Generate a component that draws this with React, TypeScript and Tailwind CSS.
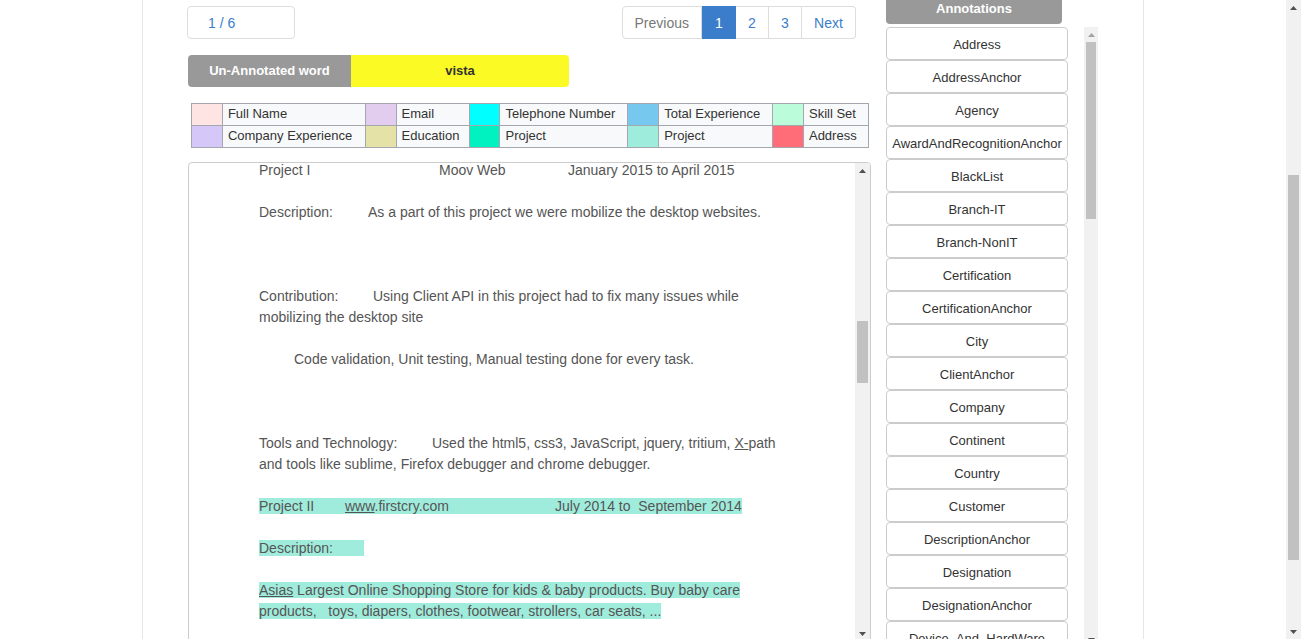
import React from 'react';

const legendRows = [
  [
    { color: 'bg-[#ffe4e4]', label: 'Full Name' },
    { color: 'bg-[#e3cdef]', label: 'Email' },
    { color: 'bg-[#00ffff]', label: 'Telephone Number' },
    { color: 'bg-[#77c8ef]', label: 'Total Experience' },
    { color: 'bg-[#bbfcda]', label: 'Skill Set' },
  ],
  [
    { color: 'bg-[#d5c8f8]', label: 'Company Experience' },
    { color: 'bg-[#e5e2a8]', label: 'Education' },
    { color: 'bg-[#00f2c0]', label: 'Project' },
    { color: 'bg-[#9decdc]', label: 'Project' },
    { color: 'bg-[#ff6e78]', label: 'Address' },
  ],
];

const labelWidths = ['w-[143px]', 'w-[73px]', 'w-[128px]', 'w-[114px]', 'w-[65px]'];

const annotations = [
  'Address',
  'AddressAnchor',
  'Agency',
  'AwardAndRecognitionAnchor',
  'BlackList',
  'Branch-IT',
  'Branch-NonIT',
  'Certification',
  'CertificationAnchor',
  'City',
  'ClientAnchor',
  'Company',
  'Continent',
  'Country',
  'Customer',
  'DescriptionAnchor',
  'Designation',
  'DesignationAnchor',
  'Device_And_HardWare',
];

function Arrow({ up, light }: { up?: boolean; light?: boolean }) {
  return (
    <svg width="7" height="4" viewBox="0 0 7 4">
      <path d={up ? 'M0 4 L3.5 0 L7 4 Z' : 'M0 0 L3.5 4 L7 0 Z'} fill={light ? '#a3a3a3' : '#505050'} />
    </svg>
  );
}

// fake native scrollbar: arrow, track with thumb, arrow
function Scrollbar({ thumb, lightUp, className }: { thumb: string; lightUp?: boolean; className: string }) {
  return (
    <div className={`flex flex-col bg-[#f1f1f1] ${className}`}>
      <div className="h-[15px] flex items-center justify-center shrink-0">
        <Arrow up light={lightUp} />
      </div>
      <div className="flex-1 px-[2px]">
        <div className={`bg-[#c1c1c1] ${thumb}`}></div>
      </div>
      <div className="h-[15px] flex items-center justify-center shrink-0">
        <Arrow />
      </div>
    </div>
  );
}

const hl = 'bg-[#a0ecdc]';

function ResumeText() {
  return (
    <div className="pl-[70px] mt-[-3px] text-[14px] leading-[21px] text-[#555] whitespace-pre">
      <div>
        <span className="inline-block w-[180px]">Project I</span>
        <span className="inline-block w-[129px]">Moov Web</span>
        January 2015 to April 2015
      </div>
      <div>&nbsp;</div>
      <div>
        <span className="inline-block w-[109px]">Description:</span>
        As a part of this project we were mobilize the desktop websites.
      </div>
      <div>&nbsp;</div>
      <div>&nbsp;</div>
      <div>&nbsp;</div>
      <div>
        <span className="inline-block w-[114px]">Contribution:</span>
        Using Client API in this project had to fix many issues while
      </div>
      <div>mobilizing the desktop site</div>
      <div>&nbsp;</div>
      <div className="pl-[35px]">Code validation, Unit testing, Manual testing done for every task.</div>
      <div>&nbsp;</div>
      <div>&nbsp;</div>
      <div>&nbsp;</div>
      <div>
        <span className="inline-block w-[173px]">Tools and Technology:</span>
        Used the html5, css3, JavaScript, jquery, tritium, <span className="underline">X-</span>path
      </div>
      <div>and tools like sublime, Firefox debugger and chrome debugger.</div>
      <div>&nbsp;</div>
      <div>
        <span className={hl}>
          <span className="inline-block w-[86px]">Project II</span>
          <span className="inline-block w-[210px]">
            <span className="underline">www</span>.firstcry.com
          </span>
          July 2014 to  September 2014
        </span>
      </div>
      <div>&nbsp;</div>
      <div>
        <span className={hl}>
          <span className="inline-block w-[105px]">Description:</span>
        </span>
      </div>
      <div>&nbsp;</div>
      <div>
        <span className={hl}>
          <span className="underline">Asias</span> Largest Online Shopping Store for kids &amp; baby products. Buy baby care
        </span>
      </div>
      <div>
        <span className={hl}>products,   toys, diapers, clothes, footwear, strollers, car seats, ...</span>
      </div>
      <div>&nbsp;</div>
      <div>&nbsp;</div>
    </div>
  );
}

export default function App() {
  return (
    <div className="flex h-[639px] overflow-hidden bg-white font-['Liberation_Sans',Arial,sans-serif] text-[#333]">
      <div className="flex-1 min-w-0">
        <div className="ml-[142px] w-[1002px] h-full border-x border-[#e6e6e6] pl-[44px] flex gap-[15px]">
          {/* Left column */}
          <div className="w-[684px] shrink-0">
            <div className="mt-[6px] flex justify-between items-start pr-[15px]">
              <div className="w-[108px] h-[33px] border border-[#ddd] rounded-[4px] pl-[20px] pt-[2px] flex items-center text-[14px] text-[#3b7dcb]">
                1 / 6
              </div>
              <div className="flex h-[33px] text-[14px]">
                <div className="px-[12px] pt-[2px] flex items-center border border-[#ddd] rounded-l-[4px] text-[#777]">Previous</div>
                <div className="w-[34px] pt-[2px] flex items-center justify-center bg-[#3b7dcb] border border-[#3b7dcb] text-white">1</div>
                <div className="w-[33px] pt-[2px] flex items-center justify-center border border-l-0 border-[#ddd] text-[#3b7dcb]">2</div>
                <div className="w-[33px] pt-[2px] flex items-center justify-center border border-l-0 border-[#ddd] text-[#3b7dcb]">3</div>
                <div className="w-[54px] pt-[2px] flex items-center justify-center border border-l-0 border-[#ddd] rounded-r-[4px] text-[#3b7dcb]">Next</div>
              </div>
            </div>

            <div className="mt-[16px] ml-[1px] flex h-[32px] text-[13px] font-bold">
              <div className="w-[163px] bg-[#999] text-white rounded-l-[4px] flex items-center justify-center">Un-Annotated word</div>
              <div className="w-[218px] bg-[#fbfa25] text-[#333] rounded-r-[4px] flex items-center justify-center">vista</div>
            </div>

            <table className="mt-[16px] ml-[4px] w-[678px] border-collapse text-[13px] text-[#333]">
              <tbody>
                {legendRows.map((row, r) => (
                  <tr key={r} className="h-[22px]">
                    {row.map((cell, i) => (
                      <React.Fragment key={i}>
                        <td className={`w-[31px] p-0 border border-[#a4a7ae] ${cell.color}`}></td>
                        <td className={`${labelWidths[i]} p-0 pl-[5px] pb-[2px] border border-[#a4a7ae] bg-[#f8f9fa] leading-[18px]`}>
                          {cell.label}
                        </td>
                      </React.Fragment>
                    ))}
                  </tr>
                ))}
              </tbody>
            </table>

            <div className="mt-[14px] ml-[1px] w-[683px] h-[480px] border border-[#ccc] rounded-[4px] flex overflow-hidden">
              <div className="flex-1 min-w-0 overflow-hidden">
                <ResumeText />
              </div>
              <Scrollbar className="w-[15px] h-full" thumb="mt-[143px] h-[62px]" />
            </div>
          </div>

          {/* Right column */}
          <div className="w-[212px] shrink-0">
            <div className="w-[176px] h-[24px] pt-[1px] bg-[#999] rounded-b-[4px] text-white font-bold text-[13px] leading-[16px] text-center">
              Annotations
            </div>
            <div className="mt-[3px] flex justify-between h-[620px]">
              <div className="w-[182px] overflow-hidden">
                {annotations.map((a) => (
                  <div
                    key={a}
                    className="h-[33px] pt-[2px] border border-[#ccc] rounded-[4px] flex items-center justify-center text-[13px] text-[#333] whitespace-nowrap"
                  >
                    {a}
                  </div>
                ))}
              </div>
              <Scrollbar className="w-[14px] h-full" lightUp thumb="h-[177px]" />
            </div>
          </div>
        </div>
      </div>

      {/* page scrollbar */}
      <Scrollbar className="w-[15px] h-full shrink-0" thumb="mt-[160px] h-[385px]" />
    </div>
  );
}
